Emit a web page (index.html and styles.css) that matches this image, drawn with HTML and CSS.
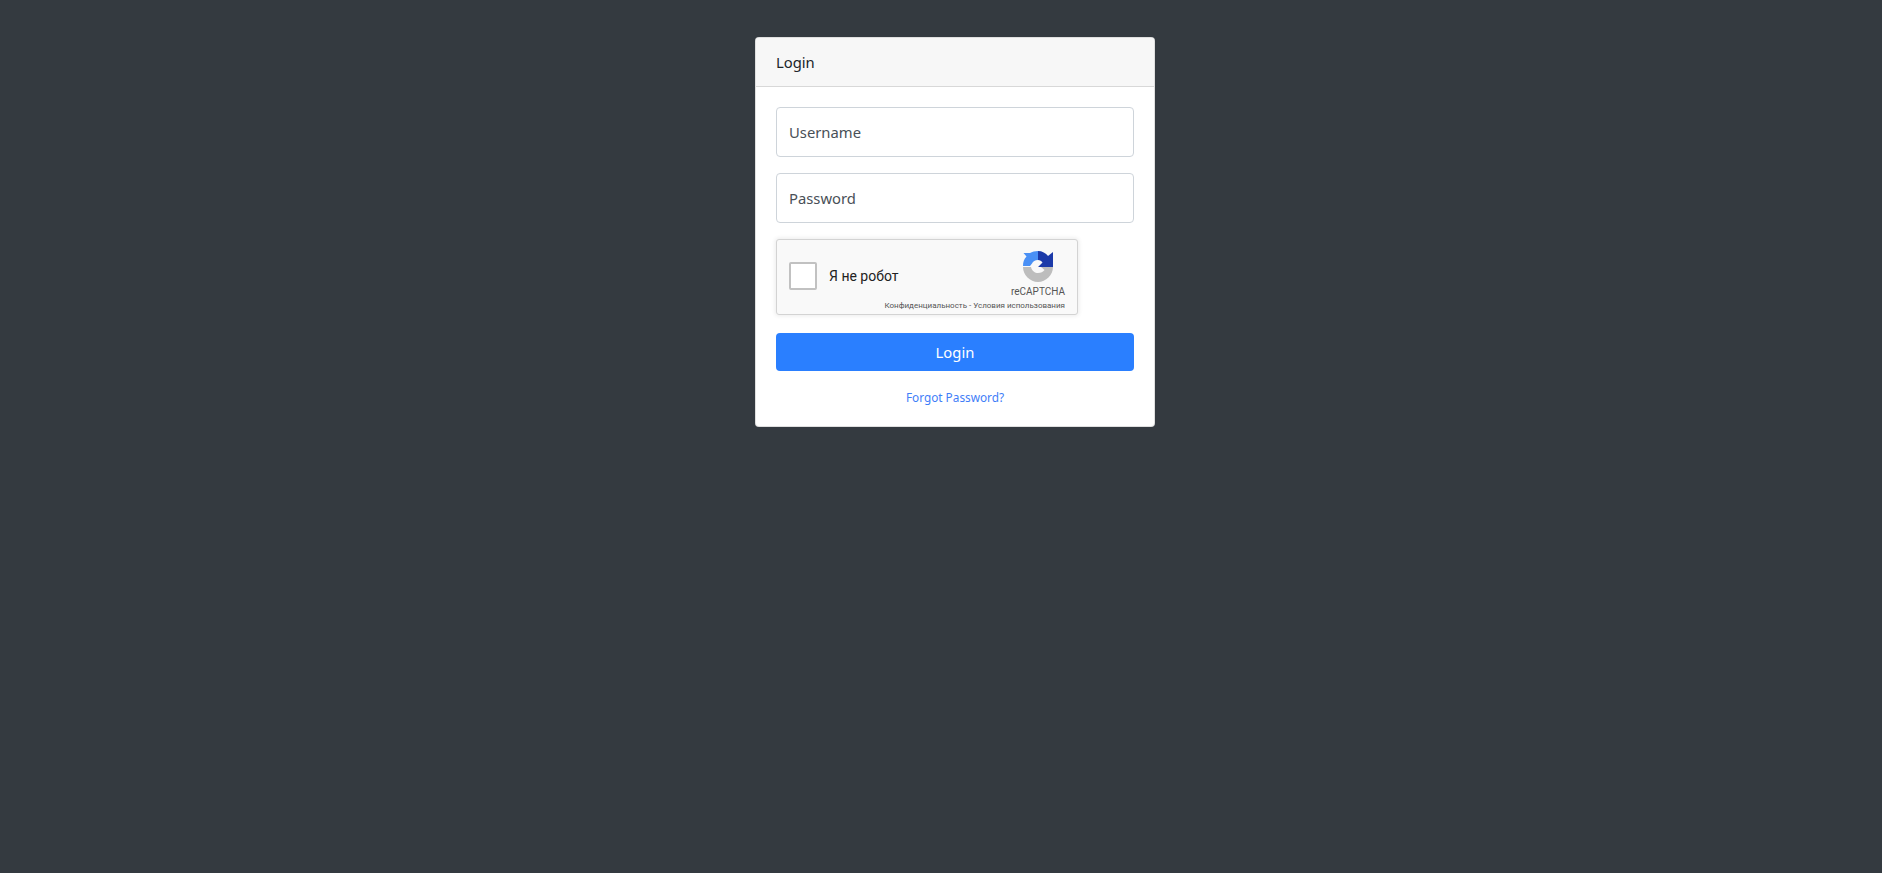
FILE: index.html
```html
<!DOCTYPE html>
<html lang="en">
<head>
    <meta charset="UTF-8">
    <meta name="viewport" content="width=device-width, initial-scale=1.0">
    <title>Login</title>
    <link rel="stylesheet" href="styles.css">
</head>
<body>
    <div class="container">
        <div class="card">
            <div class="card-header">Login</div>
            <div class="card-body">
                <form>
                    <div class="form-group">
                        <input class="form-control" type="text" placeholder="Username">
                    </div>
                    <div class="form-group">
                        <input class="form-control" type="password" placeholder="Password">
                    </div>
                    <div class="captcha">
                        <div class="captcha-left">
                            <span class="captcha-box"></span>
                            <span class="captcha-label">Я не робот</span>
                        </div>
                        <div class="captcha-right">
                            <svg class="captcha-logo" viewBox="0 0 30 31" width="30" height="31">
                                <path fill="#4a90f5" d="M0 15C0 11 1 8 3.5 5.5L.5 2H7C9 .8 12 0 15 0V9C12 9 10 10.5 9 12.5L7 15Z"/>
                                <path fill="#1c3aa9" d="M15 0C19 0 23 2 25 5L30 1V16H15L19.5 11.5C18.5 10 17 9 15 9Z"/>
                                <path fill="#bdbdbd" d="M0 16H8C9 20 12 22 15 22C18 22 20 21 21.5 19L18 16H30C30 24 23 31 15 31C7 31 0 24 0 16Z"/>
                            </svg>
                            <span class="captcha-brand">reCAPTCHA</span>
                            <span class="captcha-terms">Конфиденциальность - Условия использования</span>
                        </div>
                    </div>
                    <button class="btn" type="button">Login</button>
                </form>
                <div class="links">
                    <a href="#">Forgot Password?</a>
                </div>
            </div>
        </div>
    </div>
</body>
</html>
```
FILE: styles.css
```css
*{
    box-sizing: border-box;
}
body{
    margin:0;
    padding:0;
    background-color:#343a40;
    font-family:"Noto Sans","Open Sans",sans-serif;
    font-size:14.8px;
    color:#212529;
}
.container{
    width:100%;
    min-height:100vh;
    padding-left:28px;
    overflow: hidden;
}
.card{
    width:400px;
    margin:37px auto 0 auto;
    background-color:white;
    border:1px solid rgba(0,0,0,.125);
    border-radius:4px;
}
.card-header{
    height:49px;
    padding:12px 20px;
    line-height:24px;
    background-color:#f7f7f7;
    border-bottom:1px solid rgba(0,0,0,.125);
    border-radius:3px 3px 0 0;
}
.card-body{
    padding:20px;
}
.form-group{
    margin-bottom:16px;
}
.form-control{
    display:block;
    width:100%;
    height:50px;
    padding:12px;
    font-family:inherit;
    font-size:14.8px;
    color:#495057;
    background-color:white;
    border:1px solid #ced4da;
    border-radius:4px;
    outline:none;
}
.form-control::placeholder{
    color:#495057;
    opacity:1;
}
.captcha{
    display:flex;
    justify-content:space-between;
    width:302px;
    height:76px;
    margin-bottom:18px;
    background-color:#f9f9f9;
    border:1px solid #d3d3d3;
    border-radius:3px;
    box-shadow:0 0 4px 1px rgba(0,0,0,.08);
    font-family:Roboto,"Liberation Sans",sans-serif;
}
/* label runs under the terms line, so this column is narrower than its text */
.captcha-left{
    display:flex;
    flex:none;
    width:107px;
    align-items:center;
    gap:12px;
    padding-left:12px;
    margin-bottom:2px;
}
.captcha-box{
    flex:none;
    width:28px;
    height:28px;
    background-color:white;
    border:2px solid #c1c1c1;
    border-radius:2px;
}
.captcha-label{
    font-size:14px;
    color:#222;
    white-space:nowrap;
}
.captcha-right{
    display:flex;
    flex:none;
    flex-direction:column;
    align-items:flex-end;
    padding:11px 12px 0 0;
    color:#555;
}
.captcha-logo{
    flex-shrink:0;
    margin-right:12px;
}
.captcha-brand{
    font-size:10px;
    line-height:12px;
    margin-top:4px;
}
.captcha-terms{
    font-size:8px;
    line-height:10px;
    margin-top:3px;
    white-space:nowrap;
}
.btn{
    display:block;
    width:100%;
    height:38px;
    padding:0;
    font-family:inherit;
    font-size:14.8px;
    color:white;
    background-color:#2a7fff;
    border:none;
    border-radius:4px;
    cursor:pointer;
}
.links{
    margin-top:17px;
    text-align:center;
    font-size:11.8px;
    line-height:18px;
}
.links a{
    color:#3f7ef8;
    text-decoration:none;
}
```
